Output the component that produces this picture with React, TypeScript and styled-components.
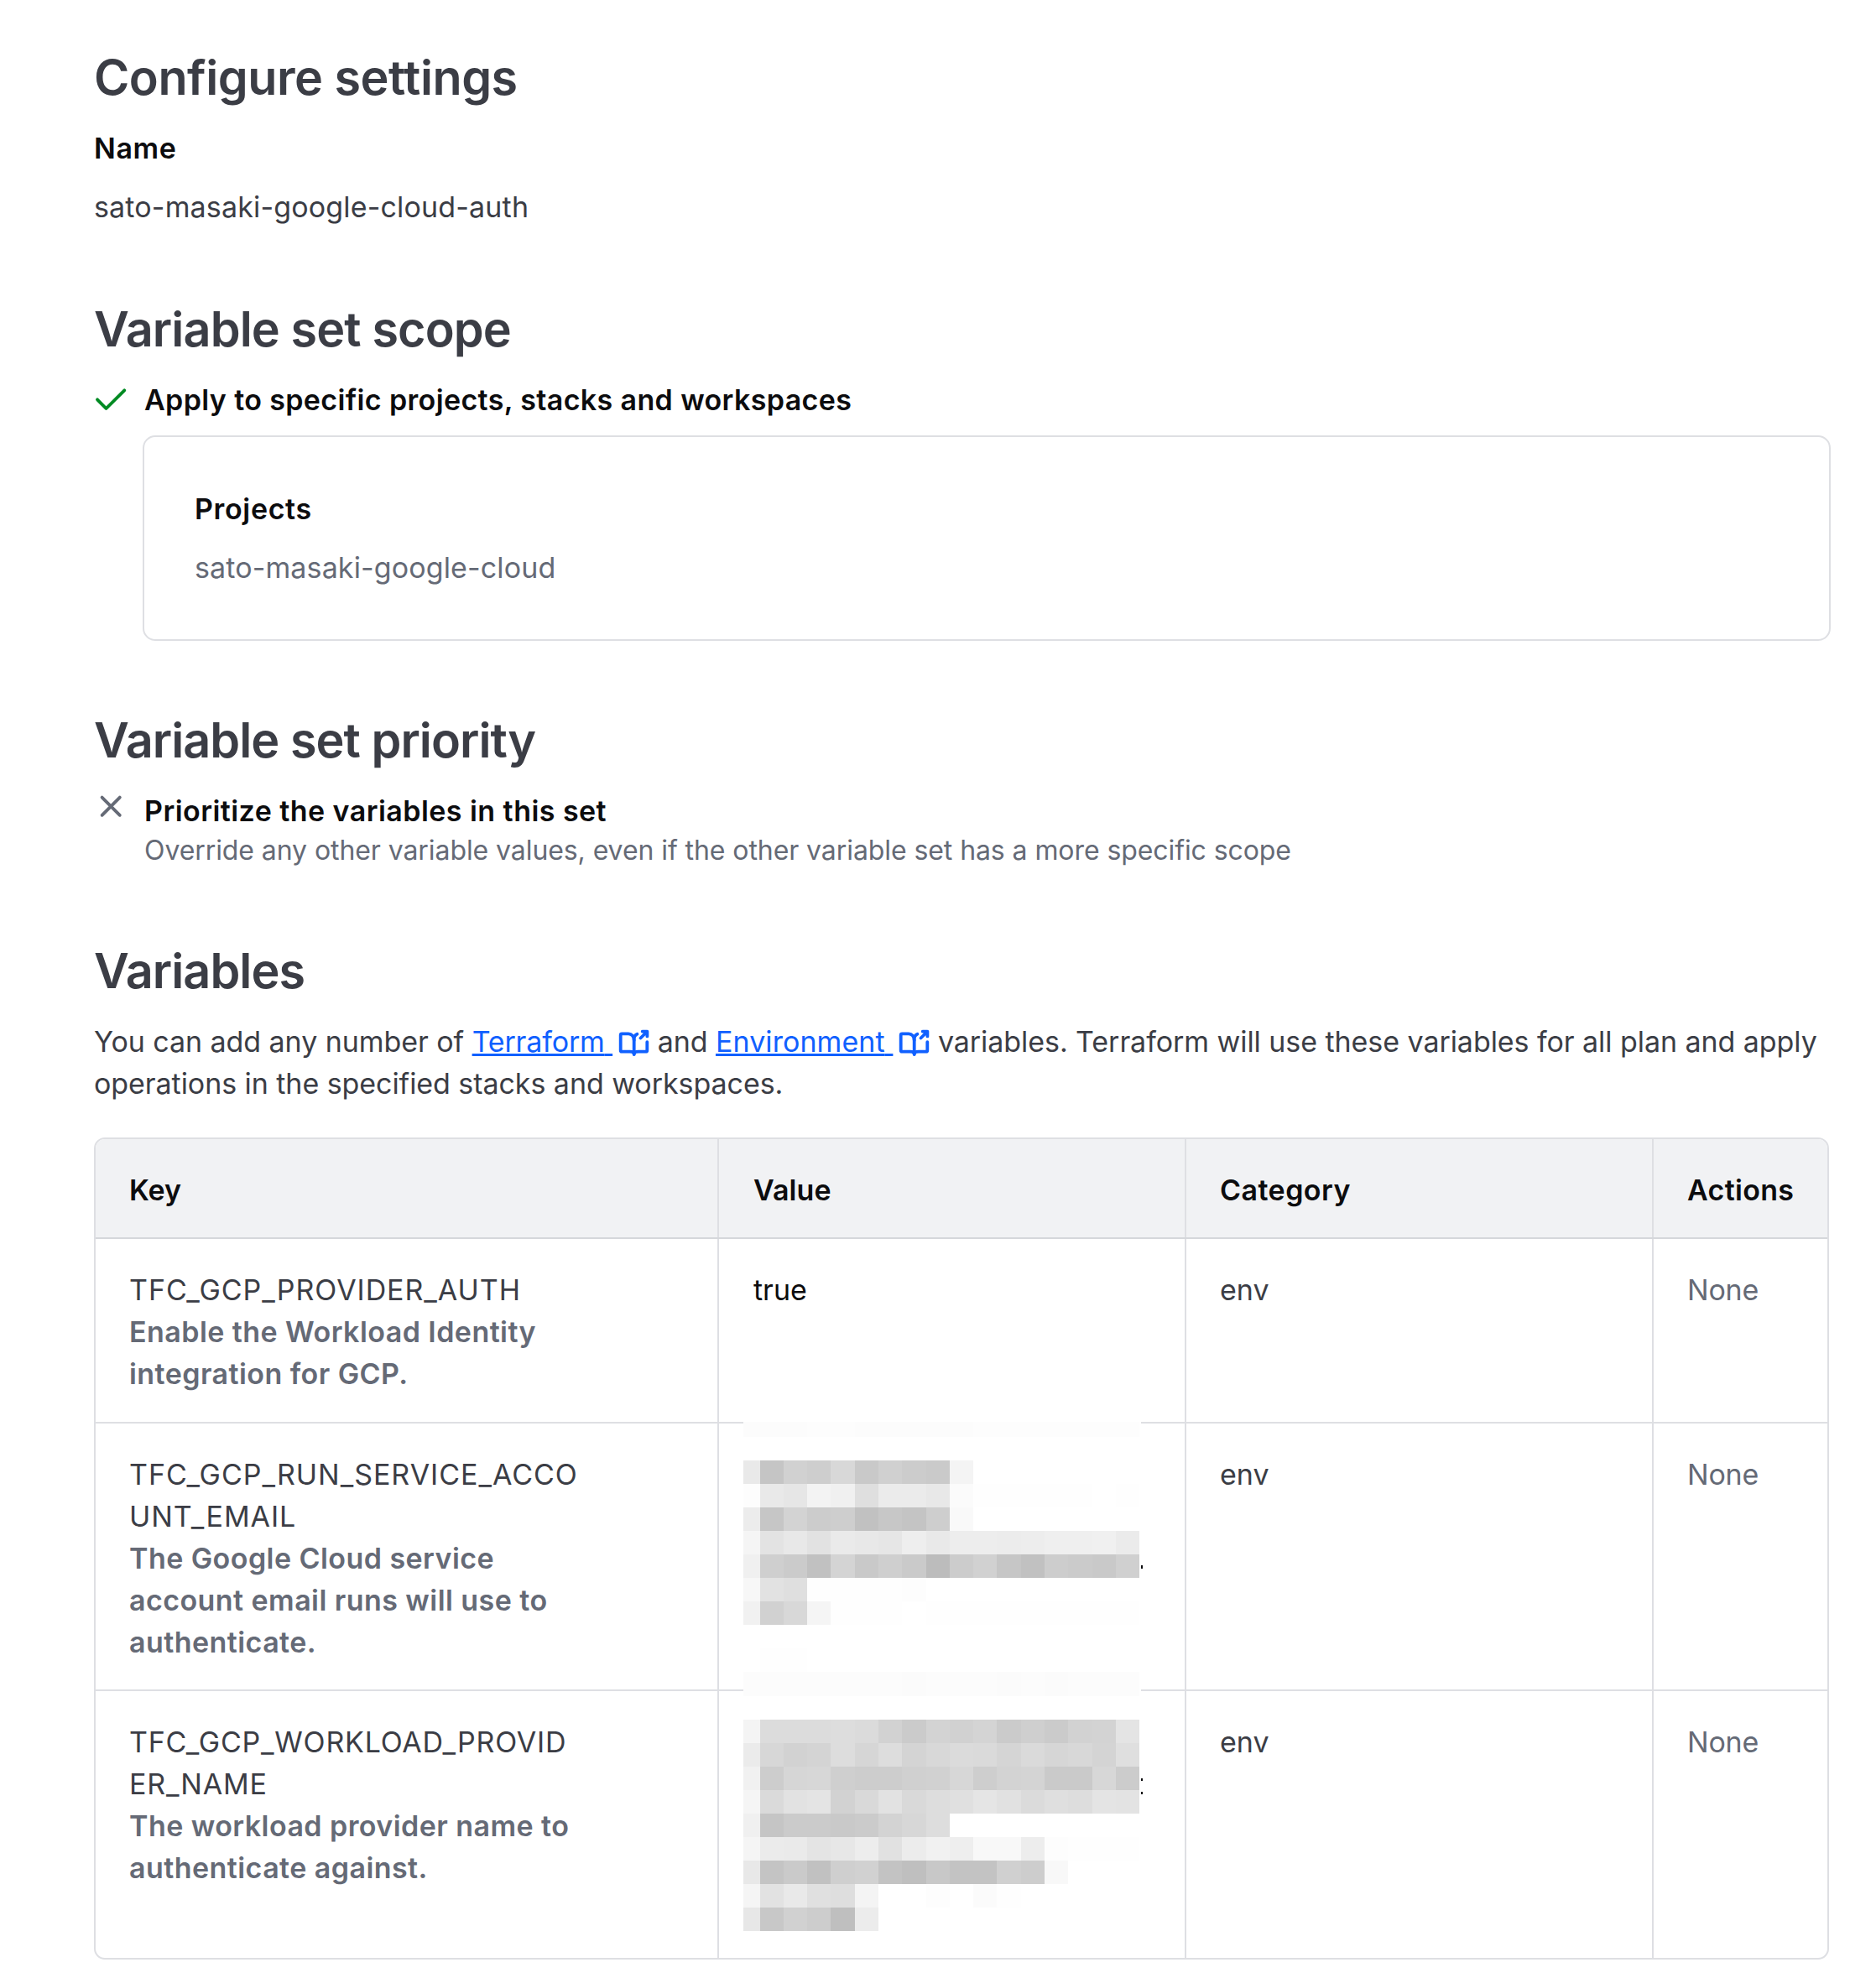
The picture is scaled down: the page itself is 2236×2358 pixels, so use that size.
import React from 'react';
import styled, { createGlobalStyle, css } from 'styled-components';

const color = {
  faint: '#656a76',
  primary: '#3b3d45',
  strong: '#0c0c0e',
  link: '#1060ff',
  success: '#008a22',
  border: '#dedfe3',
  headBorder: '#d5d7db',
  headSurface: '#f1f2f4',
};

const GlobalStyle = createGlobalStyle`
  *, *::before, *::after { box-sizing: border-box; }
  body {
    margin: 0;
    background: #fff;
    color: ${color.primary};
    font-family: Inter, 'Liberation Sans', sans-serif;
    font-size: 34px;
    line-height: 50px;
  }
  h2, h3, p { margin: 0; }
`;

const tracking = css<{ $tracking?: number }>`
  letter-spacing: ${({ $tracking = 0 }) => $tracking}px;
`;

const Page = styled.main`
  width: 2236px;
  height: 2358px;
  padding: 57px 54px 0 112px;
  display: flex;
  flex-direction: column;
  overflow: hidden;
`;

const Section = styled.section<{ $gap: number }>`
  display: flex;
  flex-direction: column;
  margin-bottom: ${({ $gap }) => $gap}px;
`;

const Title = styled.h2<{ $tracking?: number }>`
  font-size: 57.5px;
  line-height: 70px;
  font-weight: 600;
  margin-bottom: 25px;
  ${tracking}
`;

const Label = styled.h3<{ $tracking?: number }>`
  font-size: 34px;
  line-height: 50px;
  font-weight: 600;
  color: ${color.strong};
  ${tracking}
`;

const Text = styled.p<{ $faint?: boolean; $tracking?: number }>`
  color: ${({ $faint }) => ($faint ? color.faint : color.primary)};
  margin-top: 20px;
  ${tracking}
`;

const Option = styled.div`
  display: flex;
  align-items: flex-start;
  gap: 20px;
`;

const OptionIcon = styled.svg<{ $top: number }>`
  flex: none;
  width: 40px;
  height: 40px;
  margin-top: ${({ $top }) => $top}px;
  fill: none;
  stroke-width: 3.8;
  stroke-linecap: round;
  stroke-linejoin: round;
`;

const Hint = styled.p<{ $tracking?: number }>`
  font-size: 32px;
  line-height: 44px;
  color: ${color.faint};
  ${tracking}
`;

const Card = styled.div`
  height: 245px;
  margin: 17px 0 0 58px;
  padding: 61px 60px;
  border: 2px solid ${color.border};
  border-radius: 15px;
`;

const Intro = styled.p`
  letter-spacing: -0.06px;
  white-space: nowrap;
`;

const Link = styled.a<{ $tracking?: number }>`
  color: ${color.link};
  ${tracking}
`;

const LinkText = styled.span`
  text-decoration: underline;
  text-decoration-thickness: 3px;
  text-underline-offset: 2px;
`;

const LinkIcon = styled.svg`
  width: 40px;
  height: 40px;
  margin: -10px -2px -10px 6px;
  vertical-align: -1px;
  fill: none;
  stroke: ${color.link};
  stroke-width: 3.8;
  stroke-linecap: round;
  stroke-linejoin: round;
`;

const Table = styled.div`
  position: relative;
  width: 2068px;
  margin-top: 39px;
  border: 2px solid ${color.border};
  border-radius: 13px;
`;

const Row = styled.div<{ $height: number; $head?: boolean }>`
  display: grid;
  grid-template-columns: 741px 557px 557px 209px;
  height: ${({ $height }) => $height}px;
  border-bottom: 2px solid ${({ $head }) => ($head ? color.headBorder : color.border)};
  ${({ $head }) =>
    $head &&
    css`
      background: ${color.headSurface};
      border-radius: 11px 11px 0 0;
    `}
  &:last-of-type {
    border-bottom: 0;
  }
`;

const Cell = styled.div<{ $head?: boolean; $tone?: string; $tracking?: number }>`
  padding: 36px 0 0 40px;
  white-space: nowrap;
  color: ${({ $tone = color.primary }) => $tone};
  font-weight: ${({ $head }) => ($head ? 600 : 400)};
  ${tracking}
  & + & {
    border-left: 2px solid ${({ $head }) => ($head ? color.headBorder : color.border)};
  }
  &:nth-child(2) {
    padding-left: 41px;
  }
`;

const KeyName = styled.div<{ $tracking?: number }>`
  ${tracking}
`;

const KeyNote = styled.div`
  font-weight: 600;
  color: ${color.faint};
  letter-spacing: 0.44px;
`;

const Redaction = styled.div`
  position: absolute;
  left: 772px;
  top: 337px;
  width: 474px;
  height: 615px;
  background: #fff;
  display: grid;
  grid-template-columns: 19.5px repeat(16, 28.3px);
  grid-template-rows: 17.5px repeat(21, 28.1px);
`;

const Block = styled.span<{ $shade: string }>`
  background: #${({ $shade }) => $shade.repeat(3)};
`;

const Speck = styled.span<{ $top: number; $height: number }>`
  position: absolute;
  left: 474px;
  top: ${({ $top }) => $top}px;
  width: 2px;
  height: ${({ $height }) => $height}px;
  background: ${color.strong};
`;

const shades = [
  'fc fc fc fd fd fc fc fc fc fc fd fd fd fd fd fd fd',
  '',
  'e9 c5 d1 ce d8 c9 d0 cc ca f4',
  'fd e9 e6 f3 f0 df eb eb e8 fb fe fe fe fe fe ff fe',
  'ec c6 d3 cc ce c1 c7 c4 ce f9',
  'f5 e3 e8 e2 ea e8 e6 ee e9 ed ed ec ed ef ef f0 eb',
  'f0 cf cb c1 d4 c9 cf ca bc cc d1 c6 c1 cd cb c9 d0',
  'f7 e2 df fe fe fe fe fd',
  'f1 d1 d8 f5 fe fe fe ff fe fe fe fe fe fe fe fe fe',
  '',
  'ff fe fe',
  'fc fc fc fc fc fc fc fb fc fc fc fb fc fb fc fc fc',
  '',
  'f4 dc dc dc dd db d2 cb d3 d1 d4 cb cf cb d2 d3 e4',
  'eb d7 d2 d4 dd d6 dd d4 d8 db da d5 da d6 d8 d4 df',
  'f1 cd d6 d7 cf cd cd d0 d1 d7 ce d3 d4 ca ca d7 cc',
  'f5 da e2 e4 d2 d9 e2 d9 dd e0 e5 e1 db df dd e4 e3',
  'f0 c5 cb cb c9 cb d3 d7 dd',
  'f5 eb ea e4 e7 ed e1 ec f1 ee f8 f8 ed fd fe fe fe',
  'e8 c4 ca c1 cf d1 c3 bf c8 c3 c3 d0 cd f8',
  'f5 e2 e9 e0 de f4 ff ff fd ff fb fe',
  'e7 c8 d1 cd bf ec',
].flatMap((row) => {
  const cells = row ? row.split(' ') : [];
  return [...cells, ...Array(17 - cells.length).fill('ff')];
});

const variables = [
  {
    name: ['TFC_GCP_PROVIDER_AUTH'],
    tracking: 0.95,
    note: ['Enable the Workload Identity', 'integration for GCP.'],
    value: 'true',
    height: 220,
  },
  {
    name: ['TFC_GCP_RUN_SERVICE_ACCO', 'UNT_EMAIL'],
    tracking: 0.97,
    note: ['The Google Cloud service', 'account email runs will use to', 'authenticate.'],
    value: '',
    height: 319,
  },
  {
    name: ['TFC_GCP_WORKLOAD_PROVID', 'ER_NAME'],
    tracking: 0.78,
    note: ['The workload provider name to', 'authenticate against.'],
    value: '',
    height: 318,
  },
];

function DocsLink({ children, tracking: spacing }: { children: string; tracking: number }) {
  return (
    <Link $tracking={spacing}>
      <LinkText>{children} </LinkText>
      <LinkIcon viewBox="0 0 40 40">
        <path d="M19.7 15C19.7 10.5 16.8 7.3 13 7.3H5.2Q3.7 7.3 3.7 8.8V27.2Q3.7 28.7 5.2 28.7H14.5C17.2 28.7 19.7 29.6 19.7 32C19.7 29.6 22.3 28.7 25 28.7H33.8Q35.3 28.7 35.3 27.2V17.2" />
        <path d="M19.7 31.5V14C19.7 11 21.3 8.6 23.4 7.7" />
        <path d="M27.5 12.5L35 5M29.7 4.6H35.4V10.4" />
      </LinkIcon>
    </Link>
  );
}

export default function App() {
  return (
    <>
      <GlobalStyle />
      <Page>
        <Section $gap={85}>
          <Title $tracking={-0.5}>Configure settings</Title>
          <Label $tracking={0.58}>Name</Label>
          <Text $tracking={0.16}>sato-masaki-google-cloud-auth</Text>
        </Section>

        <Section $gap={83}>
          <Title $tracking={-0.88}>Variable set scope</Title>
          <Option>
            <OptionIcon viewBox="0 0 40 40" stroke={color.success} $top={2}>
              <path d="M4 22.3L14.5 33L36.3 11.3" />
            </OptionIcon>
            <Label $tracking={0.37}>Apply to specific projects, stacks and workspaces</Label>
          </Option>
          <Card>
            <Label $tracking={0.65}>Projects</Label>
            <Text $faint $tracking={0.12}>
              sato-masaki-google-cloud
            </Text>
          </Card>
        </Section>

        <Section $gap={86}>
          <Title $tracking={-0.95}>Variable set priority</Title>
          <Option>
            <OptionIcon viewBox="0 0 40 40" stroke={color.faint} $top={-1}>
              <path d="M9.6 9.6L30.8 30.8M30.8 9.6L9.6 30.8" />
            </OptionIcon>
            <div>
              <Label $tracking={0.45}>Prioritize the variables in this set</Label>
              <Hint $tracking={-0.08}>
                Override any other variable values, even if the other variable set has a more
                specific scope
              </Hint>
            </div>
          </Option>
        </Section>

        <Section $gap={0}>
          <Title $tracking={-0.93}>Variables</Title>
          <Intro>
            You can add any number of <DocsLink tracking={-0.15}>Terraform</DocsLink> and{' '}
            <DocsLink tracking={0.08}>Environment</DocsLink> variables. Terraform will use these
            variables for all plan and apply
            <br />
            operations in the specified stacks and workspaces.
          </Intro>
          <Table>
            <Row $head $height={119}>
              <Cell $head $tone={color.strong} $tracking={0}>Key</Cell>
              <Cell $head $tone={color.strong} $tracking={0.1}>Value</Cell>
              <Cell $head $tone={color.strong} $tracking={0.45}>Category</Cell>
              <Cell $head $tone={color.strong} $tracking={0.3}>Actions</Cell>
            </Row>
            {variables.map((v) => (
              <Row key={v.name[0]} $height={v.height}>
                <Cell>
                  {v.name.map((line) => (
                    <KeyName key={line} $tracking={v.tracking}>
                      {line}
                    </KeyName>
                  ))}
                  {v.note.map((line) => (
                    <KeyNote key={line}>{line}</KeyNote>
                  ))}
                </Cell>
                <Cell $tone={color.strong}>{v.value}</Cell>
                <Cell>env</Cell>
                <Cell $tone={color.faint} $tracking={-0.2}>None</Cell>
              </Row>
            ))}
            <Redaction as="aside">
              {shades.map((shade, i) => (
                <Block key={i} $shade={shade} />
              ))}
              <Speck $top={171} $height={4} />
              <Speck $top={425} $height={3} />
              <Speck $top={441} $height={3} />
            </Redaction>
          </Table>
        </Section>
      </Page>
    </>
  );
}
